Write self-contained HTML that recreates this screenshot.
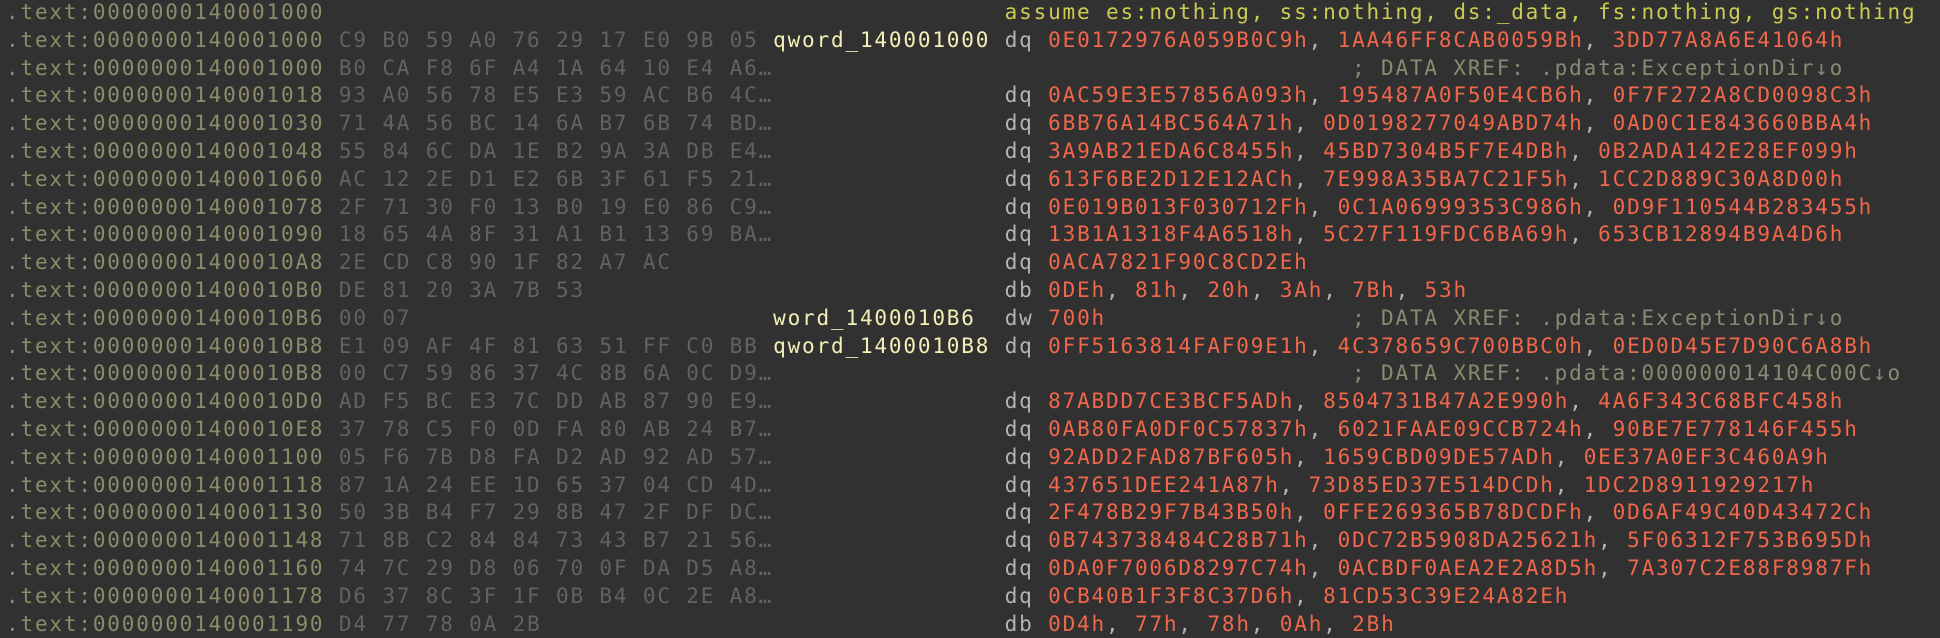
<!DOCTYPE html>
<html><head><meta charset="utf-8"><style>
html,body{margin:0;padding:0;background:#313131;width:1940px;height:622px;overflow:hidden}
pre{margin:0;position:absolute;left:6px;top:-1px;font-family:"DejaVu Sans Mono","Liberation Mono",monospace;font-size:21px;letter-spacing:1.83px;line-height:27.8px;color:#8c8c6a;white-space:pre}
.a{color:#8c8c6a}.b{color:#626262}.l{color:#f2f0b4}.k{color:#b4b4b4}.n{color:#f0674b}.c{color:#8a8a72}.y{color:#cccc55}.p{color:#b4b4b4}
</style></head><body><pre>
<span class="a">.text:0000000140001000</span>                                               <span class="y">assume es:nothing, ss:nothing, ds:_data, fs:nothing, gs:nothing</span>
<span class="a">.text:0000000140001000</span> <span class="b">C9 B0 59 A0 76 29 17 E0 9B 05</span> <span class="l">qword_140001000</span> <span class="k">dq</span> <span class="n">0E0172976A059B0C9h</span><span class="p">,</span> <span class="n">1AA46FF8CAB0059Bh</span><span class="p">,</span> <span class="n">3DD77A8A6E41064h</span>
<span class="a">.text:0000000140001000</span> <span class="b">B0 CA F8 6F A4 1A 64 10 E4 A6…</span>                                        <span class="c">; DATA XREF: .pdata:ExceptionDir↓o</span>
<span class="a">.text:0000000140001018</span> <span class="b">93 A0 56 78 E5 E3 59 AC B6 4C…</span>                <span class="k">dq</span> <span class="n">0AC59E3E57856A093h</span><span class="p">,</span> <span class="n">195487A0F50E4CB6h</span><span class="p">,</span> <span class="n">0F7F272A8CD0098C3h</span>
<span class="a">.text:0000000140001030</span> <span class="b">71 4A 56 BC 14 6A B7 6B 74 BD…</span>                <span class="k">dq</span> <span class="n">6BB76A14BC564A71h</span><span class="p">,</span> <span class="n">0D0198277049ABD74h</span><span class="p">,</span> <span class="n">0AD0C1E843660BBA4h</span>
<span class="a">.text:0000000140001048</span> <span class="b">55 84 6C DA 1E B2 9A 3A DB E4…</span>                <span class="k">dq</span> <span class="n">3A9AB21EDA6C8455h</span><span class="p">,</span> <span class="n">45BD7304B5F7E4DBh</span><span class="p">,</span> <span class="n">0B2ADA142E28EF099h</span>
<span class="a">.text:0000000140001060</span> <span class="b">AC 12 2E D1 E2 6B 3F 61 F5 21…</span>                <span class="k">dq</span> <span class="n">613F6BE2D12E12ACh</span><span class="p">,</span> <span class="n">7E998A35BA7C21F5h</span><span class="p">,</span> <span class="n">1CC2D889C30A8D00h</span>
<span class="a">.text:0000000140001078</span> <span class="b">2F 71 30 F0 13 B0 19 E0 86 C9…</span>                <span class="k">dq</span> <span class="n">0E019B013F030712Fh</span><span class="p">,</span> <span class="n">0C1A06999353C986h</span><span class="p">,</span> <span class="n">0D9F110544B283455h</span>
<span class="a">.text:0000000140001090</span> <span class="b">18 65 4A 8F 31 A1 B1 13 69 BA…</span>                <span class="k">dq</span> <span class="n">13B1A1318F4A6518h</span><span class="p">,</span> <span class="n">5C27F119FDC6BA69h</span><span class="p">,</span> <span class="n">653CB12894B9A4D6h</span>
<span class="a">.text:00000001400010A8</span> <span class="b">2E CD C8 90 1F 82 A7 AC</span>                       <span class="k">dq</span> <span class="n">0ACA7821F90C8CD2Eh</span>
<span class="a">.text:00000001400010B0</span> <span class="b">DE 81 20 3A 7B 53</span>                             <span class="k">db</span> <span class="n">0DEh</span><span class="p">,</span> <span class="n">81h</span><span class="p">,</span> <span class="n">20h</span><span class="p">,</span> <span class="n">3Ah</span><span class="p">,</span> <span class="n">7Bh</span><span class="p">,</span> <span class="n">53h</span>
<span class="a">.text:00000001400010B6</span> <span class="b">00 07</span>                         <span class="l">word_1400010B6</span>  <span class="k">dw</span> <span class="n">700h</span>                 <span class="c">; DATA XREF: .pdata:ExceptionDir↓o</span>
<span class="a">.text:00000001400010B8</span> <span class="b">E1 09 AF 4F 81 63 51 FF C0 BB</span> <span class="l">qword_1400010B8</span> <span class="k">dq</span> <span class="n">0FF5163814FAF09E1h</span><span class="p">,</span> <span class="n">4C378659C700BBC0h</span><span class="p">,</span> <span class="n">0ED0D45E7D90C6A8Bh</span>
<span class="a">.text:00000001400010B8</span> <span class="b">00 C7 59 86 37 4C 8B 6A 0C D9…</span>                                        <span class="c">; DATA XREF: .pdata:000000014104C00C↓o</span>
<span class="a">.text:00000001400010D0</span> <span class="b">AD F5 BC E3 7C DD AB 87 90 E9…</span>                <span class="k">dq</span> <span class="n">87ABDD7CE3BCF5ADh</span><span class="p">,</span> <span class="n">8504731B47A2E990h</span><span class="p">,</span> <span class="n">4A6F343C68BFC458h</span>
<span class="a">.text:00000001400010E8</span> <span class="b">37 78 C5 F0 0D FA 80 AB 24 B7…</span>                <span class="k">dq</span> <span class="n">0AB80FA0DF0C57837h</span><span class="p">,</span> <span class="n">6021FAAE09CCB724h</span><span class="p">,</span> <span class="n">90BE7E778146F455h</span>
<span class="a">.text:0000000140001100</span> <span class="b">05 F6 7B D8 FA D2 AD 92 AD 57…</span>                <span class="k">dq</span> <span class="n">92ADD2FAD87BF605h</span><span class="p">,</span> <span class="n">1659CBD09DE57ADh</span><span class="p">,</span> <span class="n">0EE37A0EF3C460A9h</span>
<span class="a">.text:0000000140001118</span> <span class="b">87 1A 24 EE 1D 65 37 04 CD 4D…</span>                <span class="k">dq</span> <span class="n">437651DEE241A87h</span><span class="p">,</span> <span class="n">73D85ED37E514DCDh</span><span class="p">,</span> <span class="n">1DC2D8911929217h</span>
<span class="a">.text:0000000140001130</span> <span class="b">50 3B B4 F7 29 8B 47 2F DF DC…</span>                <span class="k">dq</span> <span class="n">2F478B29F7B43B50h</span><span class="p">,</span> <span class="n">0FFE269365B78DCDFh</span><span class="p">,</span> <span class="n">0D6AF49C40D43472Ch</span>
<span class="a">.text:0000000140001148</span> <span class="b">71 8B C2 84 84 73 43 B7 21 56…</span>                <span class="k">dq</span> <span class="n">0B743738484C28B71h</span><span class="p">,</span> <span class="n">0DC72B5908DA25621h</span><span class="p">,</span> <span class="n">5F06312F753B695Dh</span>
<span class="a">.text:0000000140001160</span> <span class="b">74 7C 29 D8 06 70 0F DA D5 A8…</span>                <span class="k">dq</span> <span class="n">0DA0F7006D8297C74h</span><span class="p">,</span> <span class="n">0ACBDF0AEA2E2A8D5h</span><span class="p">,</span> <span class="n">7A307C2E88F8987Fh</span>
<span class="a">.text:0000000140001178</span> <span class="b">D6 37 8C 3F 1F 0B B4 0C 2E A8…</span>                <span class="k">dq</span> <span class="n">0CB40B1F3F8C37D6h</span><span class="p">,</span> <span class="n">81CD53C39E24A82Eh</span>
<span class="a">.text:0000000140001190</span> <span class="b">D4 77 78 0A 2B</span>                                <span class="k">db</span> <span class="n">0D4h</span><span class="p">,</span> <span class="n">77h</span><span class="p">,</span> <span class="n">78h</span><span class="p">,</span> <span class="n">0Ah</span><span class="p">,</span> <span class="n">2Bh</span>
</pre></body></html>
